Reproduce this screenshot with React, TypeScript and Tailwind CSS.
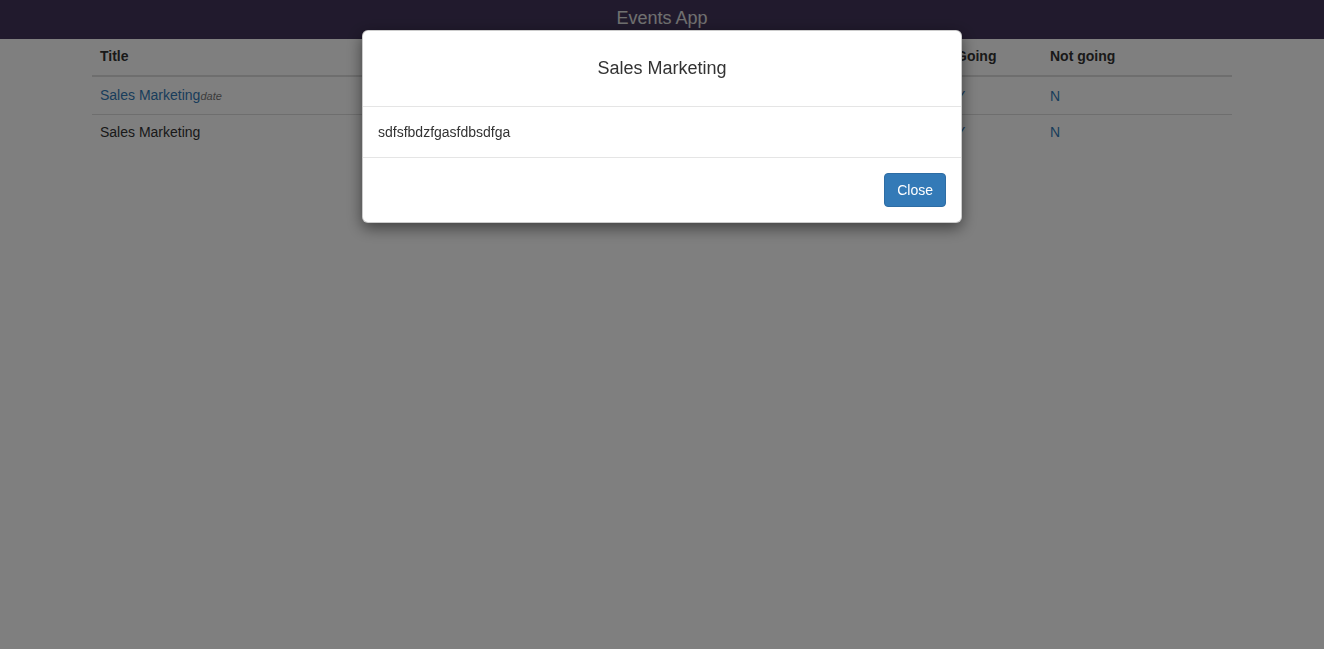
import React from 'react';

type EventRow = {
  title: string;
  linked: boolean;
};

const rows: EventRow[] = [
  { title: 'Sales Marketing', linked: true },
  { title: 'Sales Marketing', linked: false },
];

const th = 'pt-[7px] pb-[9px] px-2 text-left font-bold border-b-2 border-[#ddd]';

export default function App() {
  return (
    <div className="relative min-h-[649px] bg-white text-[14px] leading-[20px] text-[#333] font-['Liberation_Sans',Arial,sans-serif]">
      <nav className="h-[39px] pb-[4px] bg-[#42355a] flex items-center justify-center">
        <span className="text-[18px] text-[#e0e0e0]">Events App</span>
      </nav>

      <div className="w-[1170px] mx-auto px-[15px]">
        <table className="w-full table-fixed border-collapse">
          <colgroup>
            <col className="w-[400px]" />
            <col className="w-[250px]" />
            <col className="w-[206px]" />
            <col className="w-[94px]" />
            <col className="w-[190px]" />
          </colgroup>
          <thead>
            <tr>
              <th className={th}>Title</th>
              <th className={th}>Date</th>
              <th className={th}>Description</th>
              <th className={th}>Going</th>
              <th className={th}>Not going</th>
            </tr>
          </thead>
          <tbody>
            {rows.map((r, i) => {
              const td = i > 0 ? 'pt-[7px] pb-[9px] px-2 border-t border-[#ddd]' : 'py-2 px-2';
              return (
                <tr key={i}>
                  <td className={td}>
                    {r.linked ? (
                      <a className="text-[#337ab7]">
                        {r.title}
                        <i className="text-[11px] text-[#777]">date</i>
                      </a>
                    ) : (
                      r.title
                    )}
                  </td>
                  <td className={td} />
                  <td className={td} />
                  <td className={td}>
                    <a className="text-[#337ab7]">Y</a>
                  </td>
                  <td className={td}>
                    <a className="text-[#337ab7]">N</a>
                  </td>
                </tr>
              );
            })}
          </tbody>
        </table>
      </div>

      {/* backdrop */}
      <div className="fixed inset-0 bg-black/50" />

      {/* modal */}
      <div className="fixed inset-0 flex justify-center">
        <div className="w-[600px] mt-[30px] self-start bg-white border border-black/20 rounded-[6px] shadow-[0_5px_15px_rgba(0,0,0,0.5)]">
          <div className="h-[76px] pb-[2px] flex items-center justify-center border-b border-[#e5e5e5]">
            <h4 className="text-[18px] leading-[26px] text-[#333]">Sales Marketing</h4>
          </div>
          <div className="px-[15px] pt-[15px] pb-[15px] border-b border-[#e5e5e5]">sdfsfbdzfgasfdbsdfga</div>
          <div className="p-[15px] flex justify-end">
            <button
              type="button"
              className="h-[34px] px-3 bg-[#337ab7] border border-[#2e6da4] rounded-[4px] text-white text-[14px]"
            >
              Close
            </button>
          </div>
        </div>
      </div>
    </div>
  );
}
